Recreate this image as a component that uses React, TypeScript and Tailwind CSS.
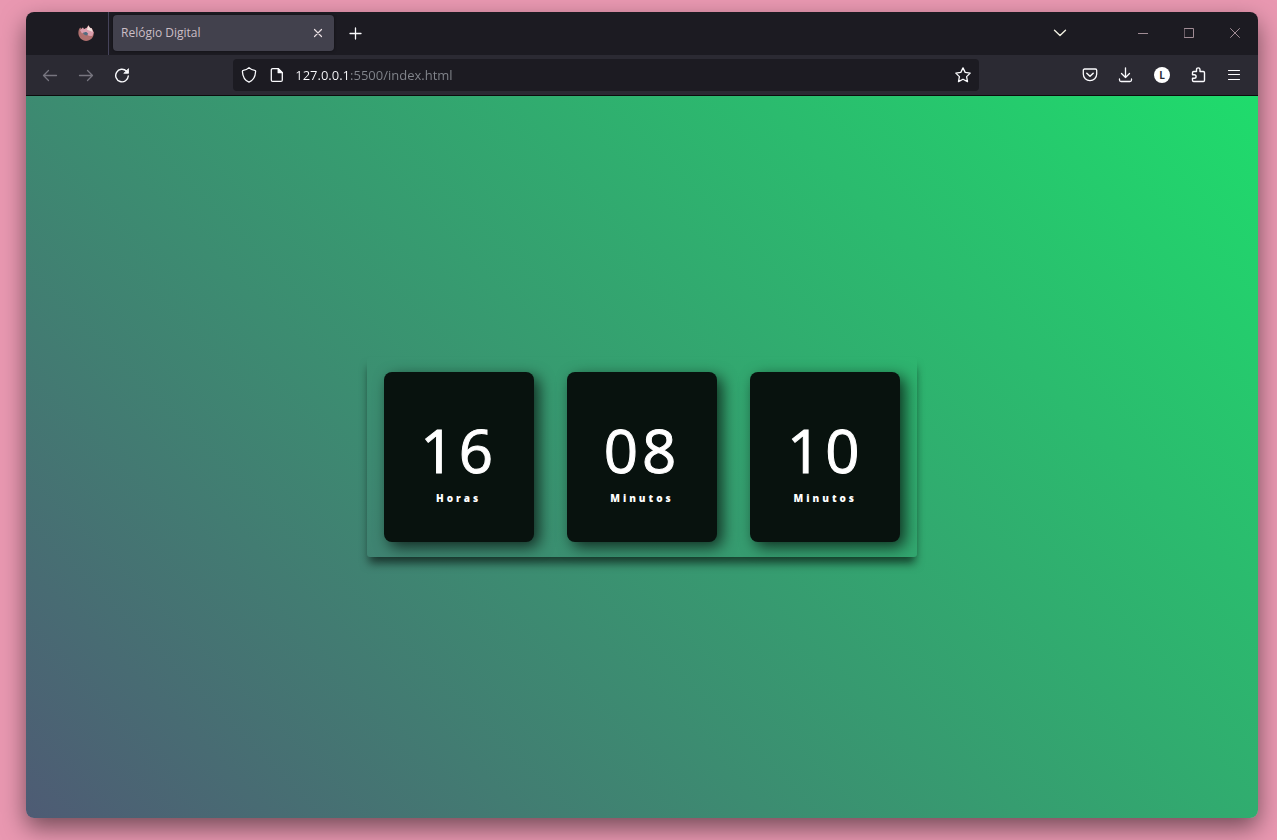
import type { ReactNode } from "react";

const stroke = {
  fill: "none",
  stroke: "currentColor",
  strokeLinecap: "round" as const,
  strokeLinejoin: "round" as const,
};

function ToolButton({ label, className = "", children }: { label: string; className?: string; children: ReactNode }) {
  return (
    <button type="button" aria-label={label} className={`flex h-8 w-9 shrink-0 items-center justify-center ${className}`}>
      {children}
    </button>
  );
}

function WindowButton({ label, children }: { label: string; children: ReactNode }) {
  return (
    <button type="button" aria-label={label} className="flex h-full w-[46px] items-center justify-center pb-px text-[#a08c95]">
      {children}
    </button>
  );
}

function FoxIcon() {
  return (
    <svg width="16" height="16" viewBox="0 0 16 16" aria-hidden="true">
      <path d="M.4 8.600C.3 6 1 4 2.300 2.600l1 1.300 1.700-1.500.8 1.800L8.600 3 10.500.2l1.300 2.400 2 .6 1.900 4C16.300 12 12.700 15.900 8.100 15.900 4 15.900.6 12.700.4 8.600Z" fill="#b0706f" />
      <path d="M2 5.200 3.300 4 5 2.500l.8 1.700L8.600 3l1.900-2.600 1.300 2.400 2 .6 1.800 4-1.300 3.600-3.700-.3-2.800-2.900-4 .4Z" fill="#dc9fae" />
      <path d="m10.400.4 1.300 2.400 2 .6.900 3.600-2.600-1.300-3-1Z" fill="#f3e3dd" />
      <path d="M4.900 7.600c1.500.3 2.300-.8 3.500-.5l1.800 1.700-1.200 1.500c-1.800.4-3.500-.6-4.100-2.700Z" fill="#536d82" />
    </svg>
  );
}

function TabStrip() {
  return (
    <div className="flex h-[43px] items-stretch bg-[#1c1b22]">
      <button type="button" aria-label="Firefox" className="flex w-[83px] items-center justify-end border-r border-[#45435a] pr-3.5 pb-0.5">
        <FoxIcon />
      </button>
      <div className="mt-[3px] mb-1 ml-1 flex w-[221px] items-center justify-between rounded bg-[#42414d] px-2 shadow-[0_0_3px_rgba(0,0,0,0.5)]">
        <span className="text-xs text-[#cbbec6]">Relógio Digital</span>
        <button type="button" aria-label="Fechar aba" className="flex size-4 items-center justify-center text-[#eadfe3]">
          <svg width="10" height="10" viewBox="0 0 10 10" {...stroke} strokeWidth="1.200"><path d="m1.500 1.500 7 7m0-7-7 7" /></svg>
        </button>
      </div>
      <button type="button" aria-label="Nova aba" className="ml-[3px] flex w-9 items-center justify-center text-[#fbfbfe]">
        <svg width="13" height="13" viewBox="0 0 13 13" {...stroke} strokeWidth="1.300"><path d="M6.500 1v11M1 6.500h11" /></svg>
      </button>
      <div className="flex-1" />
      <button type="button" aria-label="Listar abas" className="mr-[42px] flex w-9 items-center justify-center pb-px text-[#efeee0]">
        <svg width="14" height="8" viewBox="0 0 14 8" {...stroke} strokeWidth="1.400"><path d="m1.500 1.200 5.500 5.300 5.500-5.300" /></svg>
      </button>
      <WindowButton label="Minimizar">
        <svg width="11" height="11" viewBox="0 0 11 11" {...stroke} strokeLinecap="butt"><path d="M0 5.500h10" /></svg>
      </WindowButton>
      <WindowButton label="Maximizar">
        <svg width="10" height="10" viewBox="0 0 10 10" {...stroke}><path d="M.5.5h9v9h-9Z" /></svg>
      </WindowButton>
      <WindowButton label="Fechar">
        <svg width="10" height="10" viewBox="0 0 10 10" {...stroke}><path d="m.500.500 9 9m0-9-9 9" /></svg>
      </WindowButton>
    </div>
  );
}

function Toolbar() {
  return (
    <div className="flex h-[41px] items-center border-b border-[#0c0c0d] bg-[#2b2a33] px-1.5 text-[#fbfbfe]">
      <ToolButton label="Voltar" className="text-[#77757f]">
        <svg width="16" height="16" viewBox="0 0 16 16" {...stroke} strokeWidth="1.300"><path d="M14.500 8.500H1.500M6.500 3.500l-5 5 5 5" /></svg>
      </ToolButton>
      <ToolButton label="Avançar" className="text-[#77757f]">
        <svg width="16" height="16" viewBox="0 0 16 16" {...stroke} strokeWidth="1.300"><path d="M1.500 8.500h13M9.500 3.500l5 5-5 5" /></svg>
      </ToolButton>
      <ToolButton label="Recarregar">
        <svg width="16" height="16" viewBox="0 0 16 16" {...stroke} strokeWidth="1.400">
          <path d="M12.400 4A6.300 6.300 0 1 0 14.300 9" />
          <path d="M14.500 2v4.300h-4.300Z" fill="currentColor" strokeWidth=".8" />
        </svg>
      </ToolButton>
      <div className="flex-1" />
      <div className="mx-0.5 flex h-8 flex-[8] items-center rounded bg-[#1c1b22] px-2">
        <button type="button" aria-label="Proteções" className="shrink-0">
          <svg width="16" height="16" viewBox="0 0 16 16" {...stroke} strokeWidth="1.300">
            <path d="M8 .8c1.700 1.500 3.500 2.300 5.800 2.600.7 0 .9.500.8 1.100C14.300 10 12.200 13.500 8 15.200 3.800 13.500 1.700 10 1.400 4.500c0-.6.200-1.100.8-1.100C4.500 3.100 6.300 2.300 8 .8Z" />
          </svg>
        </button>
        <button type="button" aria-label="Informações do site" className="ml-3 shrink-0">
          <svg width="16" height="16" viewBox="0 0 16 16" {...stroke} strokeWidth="1.300">
            <path d="M3.700 1.600h5.600l4 4v7.300c0 .9-.5 1.500-1.400 1.500H3.700c-.9 0-1.400-.6-1.400-1.500V3.100c0-.9.500-1.500 1.400-1.500Z" />
            <path d="M9.200 1.700v4h4Z" fill="currentColor" />
          </svg>
        </button>
        <input
          aria-label="Endereço"
          defaultValue="127.0.0.1:5500/index.html"
          className="ml-2.5 h-8 min-w-0 flex-1 bg-linear-to-r from-[#fbfbfe] from-[54px] to-[#83868d] to-[54px] bg-clip-text text-[13px] text-transparent caret-white outline-none"
        />
        <button type="button" aria-label="Favoritar" className="shrink-0">
          <svg width="16" height="16" viewBox="0 0 16 16" {...stroke} strokeWidth="1.300">
            <path d="m8 .9 2.200 4.500 5 .7-3.600 3.500.9 5L8 12.200l-4.500 2.400.9-5L.8 6.100l5-.7Z" />
          </svg>
        </button>
      </div>
      <div className="flex-1" />
      <ToolButton label="Salvar no Pocket">
        <svg width="16" height="16" viewBox="0 0 16 16" {...stroke} strokeWidth="1.300">
          <path d="M2.600 2h10.800c.8 0 1.300.5 1.300 1.300V7a6.700 6.700 0 0 1-13.400 0V3.300c0-.8.500-1.300 1.300-1.300Z" />
          <path d="M4.800 6.300 8 9.300l3.200-3" strokeWidth="1.500" />
        </svg>
      </ToolButton>
      <ToolButton label="Downloads">
        <svg width="16" height="16" viewBox="0 0 16 16" {...stroke} strokeWidth="1.300">
          <path d="M7.500.8v9.700M3.500 6.500l4 4 4-4M1.500 12v1c0 1 .6 1.500 1.600 1.500h8.800c1 0 1.600-.5 1.600-1.500v-1" />
        </svg>
      </ToolButton>
      <ToolButton label="Conta">
        <span className="flex size-4 items-center justify-center rounded-full bg-white text-[10px] leading-none font-bold text-[#2b2a33]">L</span>
      </ToolButton>
      <ToolButton label="Extensões">
        <svg width="16" height="16" viewBox="0 0 16 16" {...stroke} strokeWidth="1.400">
          <path d="M6.500 4.500V2.600a1.700 1.700 0 0 1 3.500 0v1.900h3.300c.8 0 1.200.4 1.200 1.200v7.600c0 .8-.4 1.200-1.200 1.200H3.700c-.8 0-1.200-.4-1.200-1.200v-2h1.800a1.800 1.800 0 0 0 0-3.600H2.500v-2c0-.8.400-1.200 1.200-1.200Z" />
        </svg>
      </ToolButton>
      <ToolButton label="Menu">
        <svg width="14" height="12" viewBox="0 0 14 12" {...stroke} strokeWidth="1.200"><path d="M1.500 1.500h11M1.500 5.500h11M1.500 10.500h11" /></svg>
      </ToolButton>
    </div>
  );
}

const units = [
  { id: "horas", value: "16", label: "Horas" },
  { id: "minutos", value: "08", label: "Minutos" },
  { id: "segundos", value: "10", label: "Minutos" },
];

function Clock() {
  return (
    <div className="flex w-[550px] justify-around rounded-[3px] py-[15px] shadow-[0_8px_10px_-2px_rgba(0,0,0,0.6)]">
      {units.map((unit) => (
        <div
          key={unit.id}
          className="flex h-[170px] w-[150px] flex-col items-center justify-center rounded-lg bg-[#08120e] pt-2.5 text-white shadow-[5px_5px_15px_rgba(0,0,0,0.7)]"
        >
          <span className="text-[60px] leading-[64px] tracking-[4px] [-webkit-text-stroke:1px_white]">{unit.value}</span>
          <span className="mt-2 text-[10px] leading-4 font-extrabold tracking-[3px]">{unit.label}</span>
        </div>
      ))}
    </div>
  );
}

export default function App() {
  return (
    <div className="flex min-h-screen bg-[#e998b1] pt-3 pr-[19px] pb-[22px] pl-[26px] font-['Open_Sans','Noto_Sans',sans-serif]">
      <div className="flex flex-1 flex-col overflow-hidden rounded-lg shadow-[0_10px_24px_rgba(0,0,0,0.5)]">
        <TabStrip />
        <Toolbar />
        <main className="flex flex-1 items-center justify-center bg-[linear-gradient(45deg,#4e5b74,#1fdc6c)]">
          <Clock />
        </main>
      </div>
    </div>
  );
}
